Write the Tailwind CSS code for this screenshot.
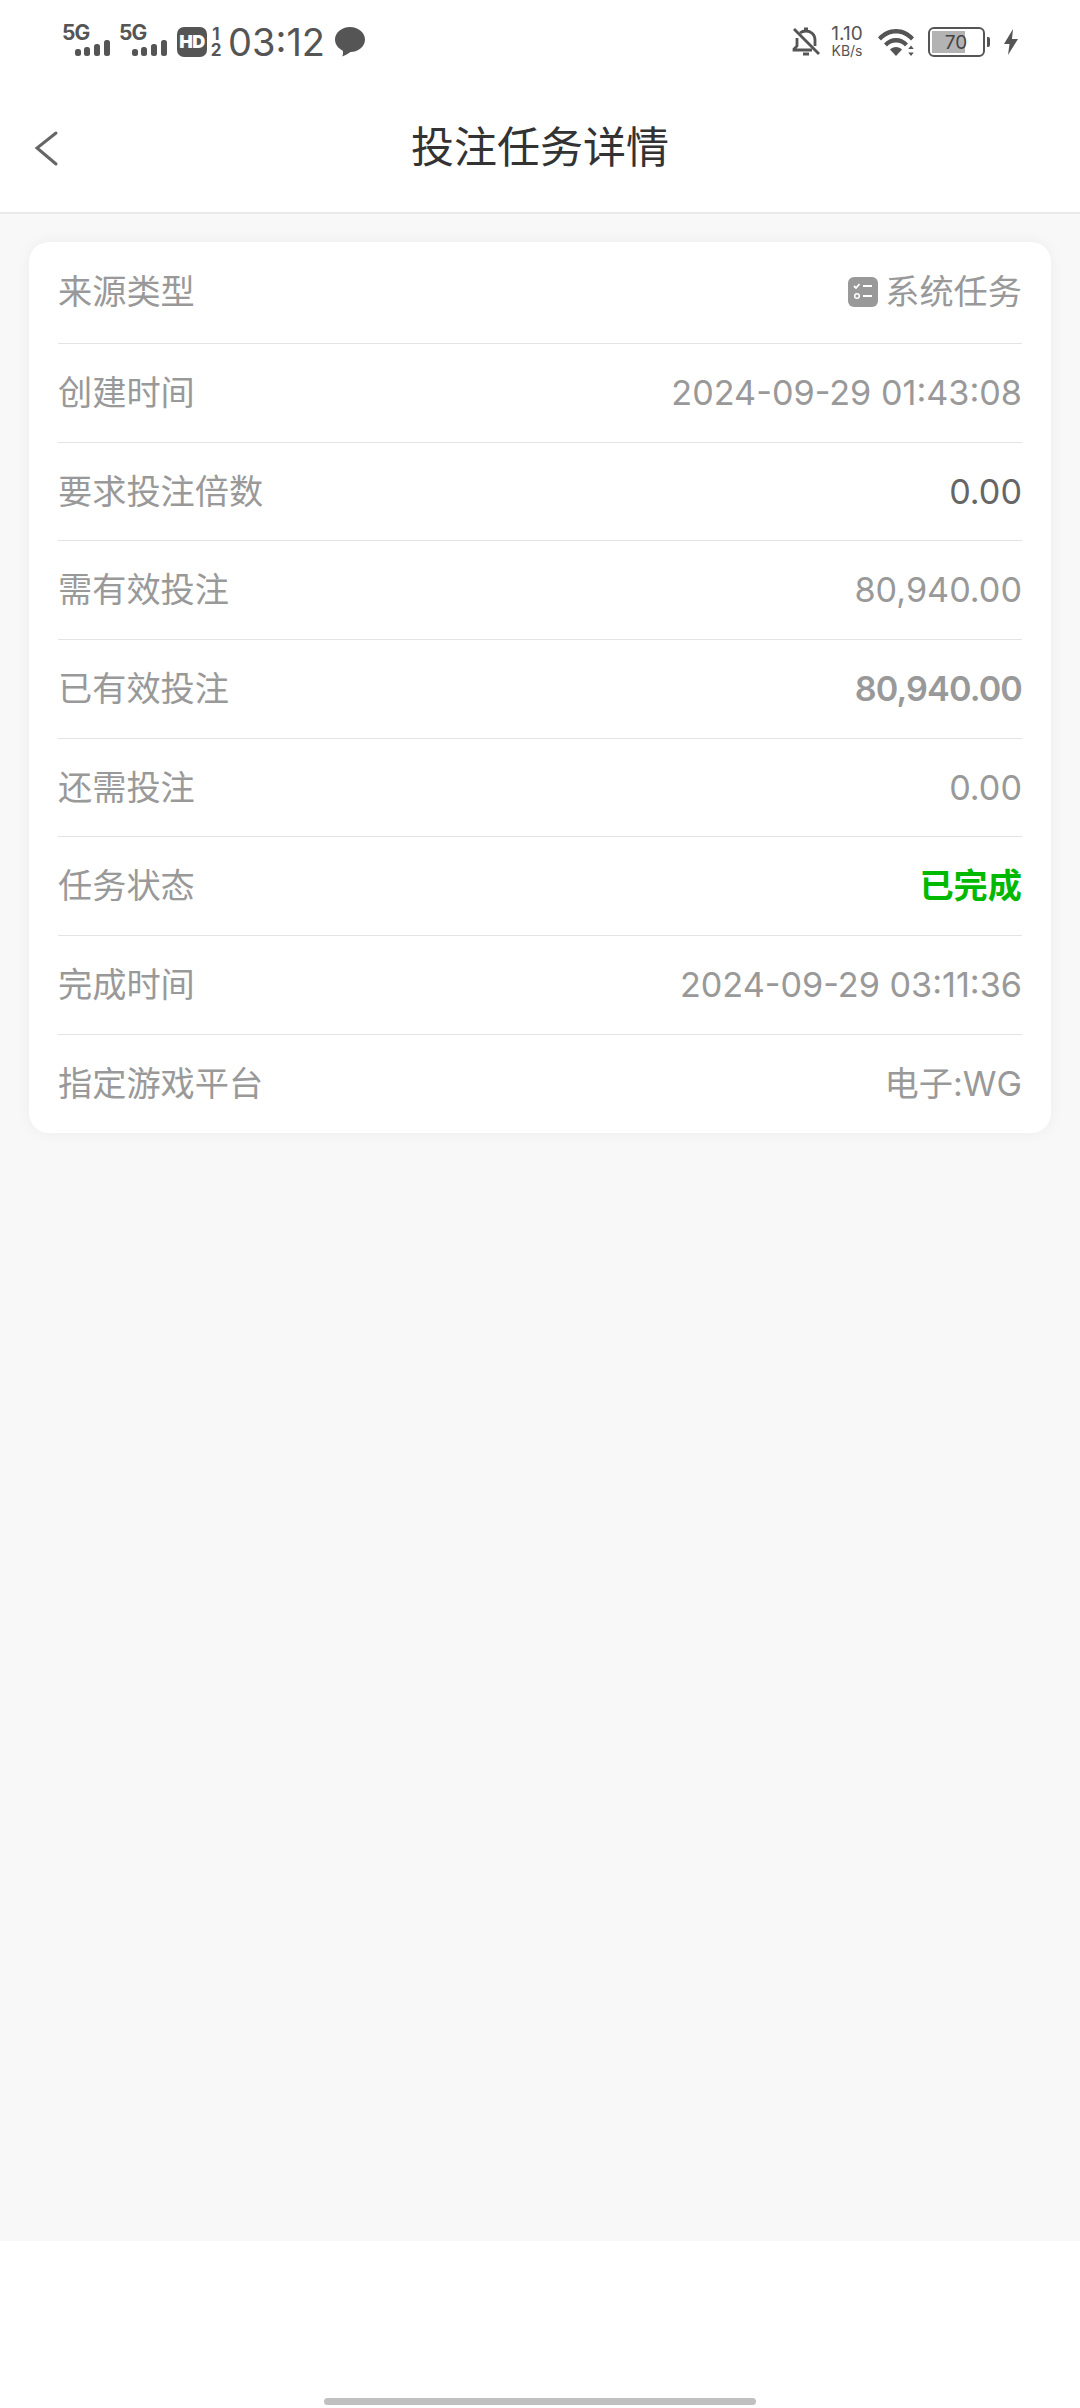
<!DOCTYPE html>
<html lang="zh"><head><meta charset="utf-8">
<script src="https://cdn.jsdelivr.net/npm/@tailwindcss/browser@4"></script>
</head>
<body class="bg-white font-['Inter','Noto_Sans_CJK_SC',sans-serif]">
<div class="w-[1080px] h-[2408px] flex flex-col overflow-hidden relative bg-white">
  <!-- status bar -->
  <div class="h-[80px] flex items-start justify-between pl-[62px] pr-[62px] pt-[25px] text-[#555]">
    <div class="flex items-start">
      <div class="w-[47px] h-[32px] relative mr-[10px]">
        <span class="absolute left-0 top-[-4px] text-[21px] leading-[23px] font-bold tracking-[-1px]">5G</span>
        <svg class="absolute left-[13px] top-[15px]" width="36" height="17" viewBox="0 0 36 17" fill="#555"><rect x="0" y="9" width="6" height="7" rx="2.5"/><rect x="9" y="7" width="6" height="9" rx="2.5"/><rect x="19" y="4" width="6" height="12" rx="2.5"/><rect x="29" y="0" width="6" height="16" rx="2.5"/></svg>
      </div>
      <div class="w-[47px] h-[32px] relative mr-[11px]">
        <span class="absolute left-0 top-[-4px] text-[21px] leading-[23px] font-bold tracking-[-1px]">5G</span>
        <svg class="absolute left-[13px] top-[15px]" width="36" height="17" viewBox="0 0 36 17" fill="#555"><rect x="0" y="9" width="6" height="7" rx="2.5"/><rect x="9" y="7" width="6" height="9" rx="2.5"/><rect x="19" y="4" width="6" height="12" rx="2.5"/><rect x="29" y="0" width="6" height="16" rx="2.5"/></svg>
      </div>
      <div class="w-[30px] h-[30px] mt-[2px] rounded-[7px] bg-[#555] flex items-center justify-center text-white text-[18px] leading-none font-black tracking-[-0.5px]">HD</div>
      <div class="w-[10px] ml-[4px] mr-[7px] mt-[1px] flex flex-col items-center text-[17px] leading-[16px] font-bold"><span>1</span><span>2</span></div>
      <div class="text-[38px] leading-[36px] mt-[-1px] w-[107px]">03:12</div>
      <svg class="mt-[2px]" width="30" height="30" viewBox="0 0 30 30" fill="#555"><path d="M15 0C6.7 0 0 5.6 0 12.6c0 4.8 3.100 8.900 7.800 11.100.5 2 .2 3.900-.5 5.700 3-.8 5.800-2.400 8.200-4.300C23.600 25 30 19.500 30 12.600 30 5.600 23.300 0 15 0z"/></svg>
    </div>
    <div class="flex items-start">
      <svg class="mt-[2px] mr-[8px]" width="28" height="30" viewBox="0 0 28 30" fill="none" stroke="#555" stroke-width="2.800"><path d="M8 6c1.500-1.300 3.500-2 6-2 5 0 9 3.500 9 9v6M5 11v8l-3 3v1h18"/><path d="M12 2h4" stroke-width="3"/><path d="M11 27h6" stroke-width="3"/><path d="M2 2l25 25" /></svg>
      <div class="w-[38px] flex flex-col items-center mr-[12px]">
        <span class="text-[19px] leading-[18px] whitespace-nowrap">1.10</span>
        <span class="text-[14px] leading-[14px] mt-[1px] whitespace-nowrap">KB/s</span>
      </div>
      <svg class="mt-[4px] mr-[11px]" width="39" height="28" viewBox="0 0 39 28" fill="#555"><path d="M0 8.500C4.500 3.200 10.800 0 18 0s13.500 3.200 18 8.500l-3 3.100C29.300 7.200 24 4.500 18 4.500S6.700 7.200 3 11.600z"/><path d="M6 14.500C9 11 13.300 9 18 9s9 2 12 5.500l-3 3C24.800 15 21.600 13.500 18 13.500S11.200 15 9 17.500z"/><path d="M12 20.500c1.500-1.600 3.600-2.500 6-2.500s4.500.9 6 2.500L18 27z"/><path d="M33 16.500l2.800 3.500h-5.600zM33 27l-2.800-3.500h5.600z"/></svg>
      <div class="relative w-[57px] h-[30px] mt-[2px] rounded-[6px] border-[2.500px] border-[#555] mr-[2px] overflow-hidden">
        <div class="absolute left-[2px] top-[2px] bottom-[2px] w-[33px] bg-[#b3b3b3]"></div>
        <div class="absolute inset-0 flex items-center justify-center text-[19px] leading-none text-[#444] pr-[1px]">70</div>
      </div>
      <div class="w-[3px] h-[10px] mt-[12px] bg-[#555] rounded-r-[2px] mr-[14px]"></div>
      <svg class="mt-[4px]" width="14" height="26" viewBox="0 0 14 26" fill="#555"><path d="M9 0L0 15h5.500L4 26l10-16H8z"/></svg>
    </div>
  </div>
  <!-- nav -->
  <div class="h-[134px] shrink-0 border-b-2 border-[#e9e9e9] bg-white relative flex items-center justify-center">
    <svg class="absolute left-[34px] top-[50px]" width="26" height="38" viewBox="0 0 26 38" fill="none" stroke="#666" stroke-width="3" stroke-linecap="round" stroke-linejoin="miter"><path d="M22 3L3 18l19 16"/></svg>
    <h1 class="text-[43px] leading-none text-[#333] font-normal mt-[3px]">投注任务详情</h1>
  </div>
  <!-- body -->
  <div class="h-[2027px] shrink-0 bg-[#f8f8f8] pt-[28px] px-[29px]">
    <div class="w-[1022px] h-[891px] bg-white rounded-[20px] shadow-[0_0_16px_rgba(0,0,0,0.05)] px-[29px] flex flex-col text-[34.2px] text-[#999]">
      <div class="h-[102px] shrink-0 flex items-center justify-between border-b border-[#e4e4e4] pb-[1px]"><span>来源类型</span>
        <span class="flex items-center gap-[7px]">
          <svg width="30" height="30" viewBox="0 0 30 30"><rect width="30" height="30" rx="6" fill="#999"/><path d="M6 9l2 2 3.500-4M15 9h9M15 19h9" fill="none" stroke="#fff" stroke-width="1.800"/><circle cx="9" cy="19" r="2.300" fill="none" stroke="#fff" stroke-width="1.500"/></svg>
          系统任务</span></div>
      <div class="h-[99px] shrink-0 flex items-center justify-between border-b border-[#e4e4e4]"><span>创建时间</span><span>2024-09-29 01:43:08</span></div>
      <div class="h-[98px] shrink-0 flex items-center justify-between border-b border-[#e4e4e4]"><span>要求投注倍数</span><span class="text-[#666]">0.00</span></div>
      <div class="h-[99px] shrink-0 flex items-center justify-between border-b border-[#e4e4e4]"><span>需有效投注</span><span>80,940.00</span></div>
      <div class="h-[99px] shrink-0 flex items-center justify-between border-b border-[#e4e4e4]"><span>已有效投注</span><span class="font-semibold tracking-[-0.9px]">80,940.00</span></div>
      <div class="h-[98px] shrink-0 flex items-center justify-between border-b border-[#e4e4e4]"><span>还需投注</span><span>0.00</span></div>
      <div class="h-[99px] shrink-0 flex items-center justify-between border-b border-[#e4e4e4]"><span>任务状态</span><span class="font-bold text-[#00b900]">已完成</span></div>
      <div class="h-[99px] shrink-0 flex items-center justify-between border-b border-[#e4e4e4]"><span>完成时间</span><span>2024-09-29 03:11:36</span></div>
      <div class="h-[98px] shrink-0 flex items-center justify-between"><span>指定游戏平台</span><span>电子:WG</span></div>
    </div>
  </div>
  <!-- bottom -->
  <div class="flex-1 bg-white flex justify-center items-end pb-[3px]">
    <div class="w-[432px] h-[7px] rounded-full bg-[#c0c0c0]"></div>
  </div>
</div>
</body></html>
